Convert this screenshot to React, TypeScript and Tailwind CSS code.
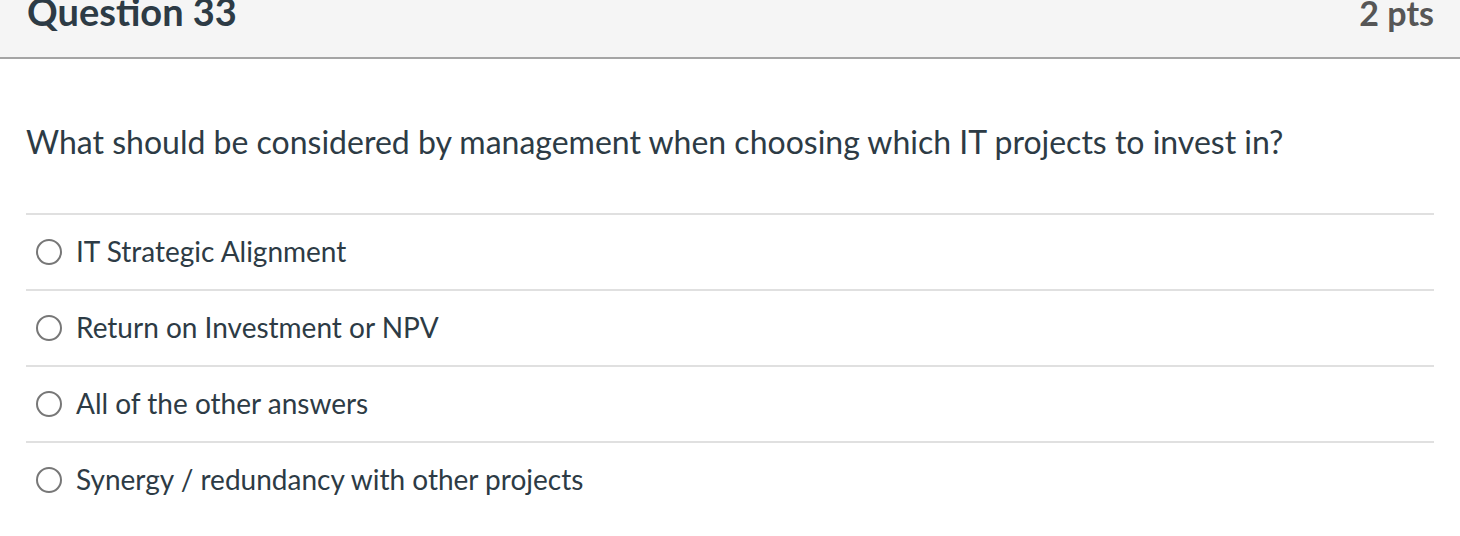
const answers = [
  'IT Strategic Alignment',
  'Return on Investment or NPV',
  'All of the other answers',
  'Synergy / redundancy with other projects',
];

export default function App() {
  return (
    <div className="h-[536px] w-[1460px] overflow-hidden bg-white" style={{ fontFamily: 'Lato, "Noto Sans", sans-serif' }}>
      <div className="flex h-[59px] items-start justify-between border-b-2 border-[#a5a5a5] bg-[#f5f5f5] pl-[27px] pr-[26px]">
        <h2 className="-mt-[13px] text-[38px] font-bold leading-[48px] text-[#2d3b45]">Question 33</h2>
        <div className="-mt-[11px] text-[34px] font-bold leading-[48px] text-[#565656]">2 pts</div>
      </div>
      <div className="px-[26px]">
        <p className="pb-[51px] pt-[63px] text-[32px] leading-[40px] text-[#2d3b45]">
          What should be considered by management when choosing which IT projects to invest in?
        </p>
        <div>
          {answers.map((a) => (
            <label key={a} className="flex h-[76px] items-center gap-[14px] border-t-2 border-[#e0e0e0] pl-[10px]">
              <span className="h-[26px] w-[26px] shrink-0 rounded-full border-2 border-[#777]" />
              <span className="-mt-[2px] text-[28px] leading-[36px] text-[#2d3b45]">{a}</span>
            </label>
          ))}
        </div>
      </div>
    </div>
  );
}
